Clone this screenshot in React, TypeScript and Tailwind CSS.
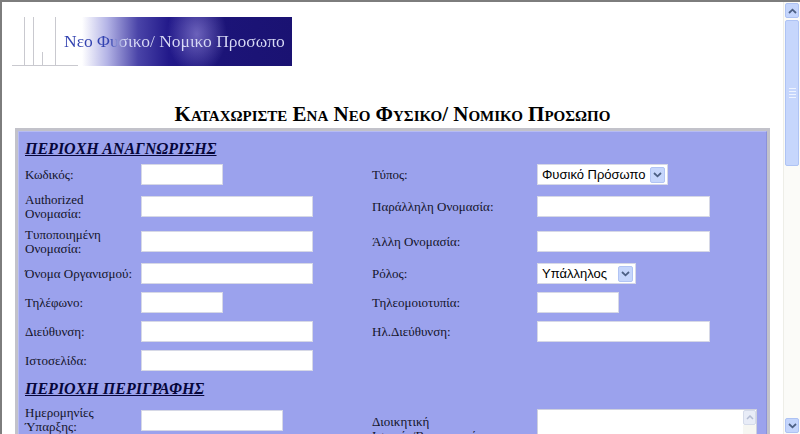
import React from "react";

function TextField({ w }: { w: string }) {
  return (
    <input
      type="text"
      readOnly
      className={`block h-[21px] ${w} bg-white border border-[#d6d8e6] outline-none`}
    />
  );
}

function Dropdown({ value, w }: { value: string; w: string }) {
  return (
    <div className={`h-[21px] ${w} bg-white border border-[#d6d8e6] flex items-center pl-[4px] pr-[2px]`}>
      <span className="flex-1 font-['Liberation_Sans',sans-serif] text-[13px] leading-none text-black">
        {value}
      </span>
      <span className="w-[15px] h-[16px] rounded-[2px] bg-[#c6d6fc] border border-[#b1c4f4] flex items-center justify-center">
        <svg width="9" height="6" viewBox="0 0 9 6">
          <path d="M1 1l3.5 3.3L8 1" stroke="#4d6185" strokeWidth="1.8" fill="none" />
        </svg>
      </span>
    </div>
  );
}

function Label({ lines }: { lines: string[] }) {
  return (
    <div className="text-[13px] leading-[14px] text-[#14142a]">
      {lines.map((l) => (
        <div key={l}>{l}</div>
      ))}
    </div>
  );
}

function SectionTitle({ children, pad }: { children: React.ReactNode; pad: string }) {
  return (
    <div className={`${pad} text-[16px] leading-[18px] font-bold italic underline text-[#06063a]`}>
      {children}
    </div>
  );
}

function ScrollButton({ up }: { up?: boolean }) {
  return (
    <div className="shrink-0 h-[15px] mx-[1px] rounded-[2px] bg-[#c4d5fc] border border-[#adc2f3] flex items-center justify-center">
      <svg width="9" height="6" viewBox="0 0 9 6">
        <path
          d={up ? "M1 5l3.5-3.3L8 5" : "M1 1l3.5 3.3L8 1"}
          stroke="#4d6185"
          strokeWidth="1.8"
          fill="none"
        />
      </svg>
    </div>
  );
}

export default function App() {
  const rows = [
    {
      h: "h-[29px]",
      left: ["Κωδικός:"],
      lw: "w-[82px]",
      right: ["Τύπος:"],
      select: "Φυσικό Πρόσωπο",
      rw: "w-[131px]",
    },
    {
      h: "h-[35px]",
      left: ["Authorized", "Ονομασία:"],
      lw: "w-[172px]",
      right: ["Παράλληλη Ονομασία:"],
      rw: "w-[173px]",
    },
    {
      h: "h-[35px]",
      left: ["Τυποποιημένη", "Ονομασία:"],
      lw: "w-[172px]",
      right: ["Άλλη Ονομασία:"],
      rw: "w-[173px]",
    },
    {
      h: "h-[29px]",
      left: ["Όνομα Οργανισμού:"],
      lw: "w-[172px]",
      right: ["Ρόλος:"],
      select: "Υπάλληλος",
      rw: "w-[99px]",
    },
    {
      h: "h-[29px]",
      left: ["Τηλέφωνο:"],
      lw: "w-[82px]",
      right: ["Τηλεομοιοτυπία:"],
      rw: "w-[82px]",
    },
    {
      h: "h-[29px]",
      left: ["Διεύθυνση:"],
      lw: "w-[172px]",
      right: ["Ηλ.Διεύθυνση:"],
      rw: "w-[173px]",
    },
    {
      h: "h-[29px]",
      left: ["Ιστοσελίδα:"],
      lw: "w-[172px]",
      right: [] as string[],
      rw: "",
    },
  ];

  return (
    <div className="h-[434px] w-[800px] overflow-hidden flex bg-white border-t-2 border-l-2 border-[#7d7d7d] font-['Liberation_Serif',serif]">
      {/* page */}
      <div className="flex-1 min-w-0 overflow-hidden">
        {/* banner */}
        <div className="mt-[15px] ml-[10px] relative w-[280px] h-[49px] bg-[linear-gradient(to_right,#ffffff_0%,#ffffff_25%,#b4b4e6_34%,#4a44a8_45%,#22198a_56%,#1c1478_75%,#1a1272_100%)]">
          <div className="absolute inset-0 bg-[radial-gradient(ellipse_30px_40px_at_66%_35%,rgba(170,160,235,0.55),transparent)]" />
          <svg className="absolute left-0 top-0" width="80" height="49" viewBox="0 0 80 49">
            <g stroke="#c9c9cf" strokeWidth="1">
              <line x1="12.5" y1="0" x2="12.5" y2="48" />
              <line x1="21.5" y1="0" x2="21.5" y2="48" />
              <line x1="30.5" y1="35" x2="30.5" y2="48" />
              <line x1="43.5" y1="0" x2="43.5" y2="48" />
              <line x1="0" y1="48.5" x2="66" y2="48.5" />
            </g>
          </svg>
          <div className="absolute left-[52px] top-[14px] text-[17.5px] leading-[20px] whitespace-nowrap bg-[linear-gradient(to_right,#3242b0_0%,#3242b0_21%,#d8daf5_27%,#d8daf5_100%)] bg-clip-text text-transparent">
            Νεο Φυσικο/ Νομικο Προσωπο
          </div>
        </div>

        {/* title */}
        <div className="mt-[37px] text-center text-[21px] leading-[22px] font-bold [font-variant:small-caps] text-black">
          Καταχωριστε Ενα Νεο Φυσικο/ Νομικο Προσωπο
        </div>

        {/* form panel */}
        <div className="mt-[3px] mx-[13px] border-[3px] border-[#c2c2ca]">
          <div className="border border-t-[#b6bbf4] border-l-[#b6bbf4] border-r-[#8b91da] border-b-[#8b91da] bg-[#9ba2ed] pl-[6px] pb-[10px]">
            <SectionTitle pad="pt-[8px] pb-[2px]">ΠΕΡΙΟΧΗ ΑΝΑΓΝΩΡΙΣΗΣ</SectionTitle>

            {rows.map((r, i) => (
              <div key={i} className={`flex items-center ${r.h}`}>
                <div className="w-[116px]">
                  <Label lines={r.left} />
                </div>
                <div className="w-[231px]">
                  <TextField w={r.lw} />
                </div>
                <div className="w-[165px]">
                  <Label lines={r.right} />
                </div>
                <div className="flex-1">
                  {r.select ? (
                    <Dropdown value={r.select} w={r.rw} />
                  ) : r.rw ? (
                    <TextField w={r.rw} />
                  ) : null}
                </div>
              </div>
            ))}

            <SectionTitle pad="pt-[5px]">ΠΕΡΙΟΧΗ ΠΕΡΙΓΡΑΦΗΣ</SectionTitle>

            <div className="flex items-start h-[60px]">
              <div className="w-[347px] mt-[8px] flex items-center">
                <div className="w-[116px]">
                  <Label lines={["Ημερομηνίες", "Ύπαρξης:"]} />
                </div>
                <TextField w="w-[142px]" />
              </div>
              <div className="w-[165px] mt-[17px]">
                <Label lines={["Διοικητική", "Ιστορία/Βιογραφικό:"]} />
              </div>
              <div className="mt-[11px] w-[220px] h-[48px] bg-white border border-[#cfd1de] flex justify-end">
                <div className="w-[13px] flex flex-col">
                  <div className="h-[15px] rounded-[2px] bg-[#e8ecf7] border border-[#d5dbea] flex items-center justify-center">
                    <svg width="8" height="5" viewBox="0 0 8 5">
                      <path d="M1 4l3-3 3 3" stroke="#b3bcd3" strokeWidth="1.5" fill="none" />
                    </svg>
                  </div>
                  <div className="flex-1 bg-[#f6f6f2]" />
                </div>
              </div>
            </div>
          </div>
        </div>
      </div>

      {/* window scrollbar */}
      <div className="w-[17px] shrink-0 flex flex-col pt-[1px] pb-[1px] bg-[#fbfbf8] border-l border-[#eeeee8]">
        <ScrollButton up />
        <div className="shrink-0 mt-[2px] h-[146px] mx-[1px] rounded-[2px] bg-[#c6d6fc] border border-[#aec3f4] flex flex-col items-center justify-center gap-[2px]">
          <div className="w-[7px] h-px bg-[#eef3ff]" />
          <div className="w-[7px] h-px bg-[#eef3ff]" />
          <div className="w-[7px] h-px bg-[#eef3ff]" />
          <div className="w-[7px] h-px bg-[#eef3ff]" />
        </div>
        <div className="flex-1" />
        <ScrollButton />
      </div>
    </div>
  );
}
